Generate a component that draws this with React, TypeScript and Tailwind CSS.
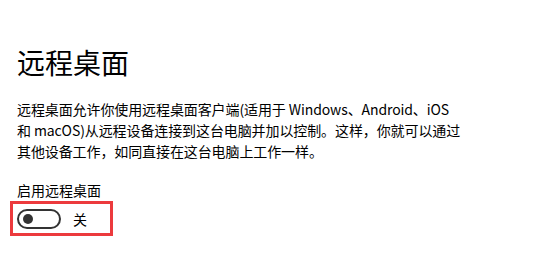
export default function App() {
  return (
    <div
      className="w-[548px] h-[266px] bg-white text-black overflow-hidden"
      style={{ fontFamily: '"Noto Sans CJK SC", "Noto Sans", sans-serif' }}
    >
      <div className="pl-[17px] pt-[42px]">
        <h1 className="text-[28px] leading-[40px] font-normal">远程桌面</h1>

        <p className="mt-[17px] text-[14px] leading-[21px] whitespace-nowrap tracking-[-0.1px]">
          远程桌面允许你使用远程桌面客户端(适用于 Windows、Android、iOS
          <br />
          和 macOS)从远程设备连接到这台电脑并加以控制。这样，你就可以通过
          <br />
          其他设备工作，如同直接在这台电脑上工作一样。
        </p>

        <div className="mt-[18px] text-[14px] leading-[20px]">启用远程桌面</div>
      </div>

      {/* highlighted toggle */}
      <div className="ml-[10px] mt-[1px] w-[103px] h-[35px] border-[3px] border-[#ec3a3d] flex items-center pl-[4px]">
        <div className="w-[44px] h-[20px] rounded-full border-2 border-[#333] flex items-center pl-[4px]">
          <div className="w-[10px] h-[10px] rounded-full bg-[#333]" />
        </div>
        <span className="ml-[12px] text-[14px] leading-[20px]">关</span>
      </div>
    </div>
  )
}
